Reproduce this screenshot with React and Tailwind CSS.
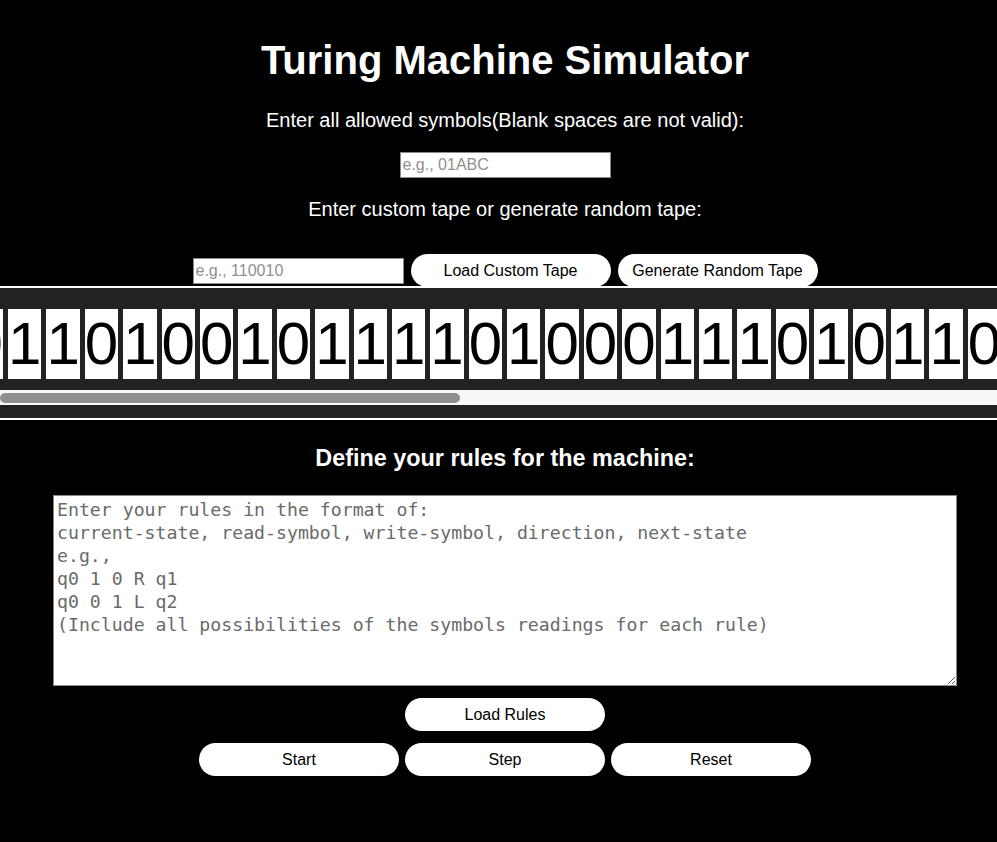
const TAPE = '0' + '11010010111101000111010110' + '1011001';

function Cell({ ch }) {
  return (
    <div className="w-[33.4px] h-[70px] shrink-0 bg-white text-black text-[60px] leading-[70px] text-center overflow-hidden">
      {ch}
    </div>
  );
}

function PillButton({ children }) {
  return (
    <button className="w-[200px] h-[33px] rounded-full bg-white text-black text-[16px] leading-none">
      {children}
    </button>
  );
}

export default function App() {
  return (
    <div className="min-h-screen bg-black text-white font-['Liberation_Sans',Arial,sans-serif] pb-[66px]">
      {/* Header + inputs */}
      <div className="flex flex-col items-center pl-[13px]">
        <h1 className="mt-[37px] text-[40px] leading-[46px] font-bold">Turing Machine Simulator</h1>
        <p className="mt-[26px] text-[20px] leading-[23px]">Enter all allowed symbols(Blank spaces are not valid):</p>
        <input
          type="text"
          placeholder="e.g., 01ABC"
          className="mt-[20px] w-[211px] h-[26px] px-[2px] bg-white text-black text-[16px] border border-[#8a8a8a] placeholder:text-[#8f8f8f] outline-none"
        />
        <p className="mt-[20px] text-[20px] leading-[23px]">Enter custom tape or generate random tape:</p>
        <div className="mt-[33px] flex items-center gap-[7px]">
          <input
            type="text"
            placeholder="e.g., 110010"
            className="w-[211px] h-[26px] px-[2px] bg-white text-black text-[16px] border border-[#8a8a8a] placeholder:text-[#8f8f8f] outline-none"
          />
          <PillButton>Load Custom Tape</PillButton>
          <PillButton>Generate Random Tape</PillButton>
        </div>
      </div>

      {/* Tape */}
      <div className="-mt-px border-y-2 border-white bg-[#222] pt-[21px] pb-[13px]">
        <div className="overflow-hidden">
          <div className="flex gap-[5px] ml-[-30.4px]">
            {TAPE.split('').map((ch, i) => (
              <Cell key={i} ch={ch} />
            ))}
          </div>
        </div>
        <div className="mt-[11px] h-[15px] bg-[#f8f8f8] flex items-center">
          <div className="w-[460px] h-[10px] rounded-full bg-[#8f8f8f]" />
        </div>
      </div>

      {/* Rules */}
      <div className="flex flex-col items-center pl-[13px]">
        <h3 className="mt-[25px] text-[23.4px] leading-[27px] font-bold">Define your rules for the machine:</h3>
        <textarea
          placeholder={
            'Enter your rules in the format of:\ncurrent-state, read-symbol, write-symbol, direction, next-state\ne.g.,\nq0 1 0 R q1\nq0 0 1 L q2\n(Include all possibilities of the symbols readings for each rule)'
          }
          className="mt-[23px] w-[904px] h-[191px] px-[3px] py-[2px] bg-white text-black border border-[#8a8a8a] font-['DejaVu_Sans_Mono',monospace] text-[18.2px] leading-[23px] placeholder:text-[#6a6a6a] outline-none"
        />
        <div className="mt-[12px]">
          <PillButton>Load Rules</PillButton>
        </div>
        <div className="mt-[12px] flex gap-[6px]">
          <PillButton>Start</PillButton>
          <PillButton>Step</PillButton>
          <PillButton>Reset</PillButton>
        </div>
      </div>
    </div>
  );
}
